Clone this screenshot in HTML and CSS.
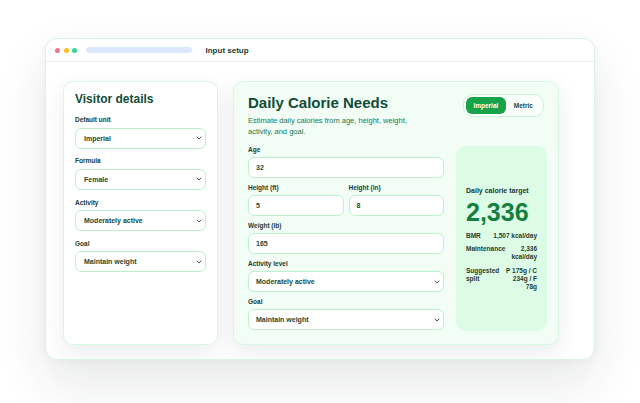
FILE: index.html
```html
<!DOCTYPE html>
<html lang="en">
<head>
<meta charset="utf-8">
<title>Input setup</title>
<link rel="stylesheet" href="styles.css">
</head>
<body>
<div class="window">
  <header class="titlebar">
    <span class="dot dot-red"></span>
    <span class="dot dot-yellow"></span>
    <span class="dot dot-green"></span>
    <span class="url"></span>
    <span class="win-title">Input setup</span>
  </header>

  <main class="workspace">
    <aside class="panel visitor">
      <h2 class="visitor-title">Visitor details</h2>
      <div class="field">
        <div class="label">Default unit</div>
        <div class="control select">Imperial<svg class="chev" viewBox="0 0 6 4"><path d="M1 1l2 2 2-2"/></svg></div>
      </div>
      <div class="field">
        <div class="label">Formula</div>
        <div class="control select">Female<svg class="chev" viewBox="0 0 6 4"><path d="M1 1l2 2 2-2"/></svg></div>
      </div>
      <div class="field">
        <div class="label">Activity</div>
        <div class="control select">Moderately active<svg class="chev" viewBox="0 0 6 4"><path d="M1 1l2 2 2-2"/></svg></div>
      </div>
      <div class="field">
        <div class="label">Goal</div>
        <div class="control select">Maintain weight<svg class="chev" viewBox="0 0 6 4"><path d="M1 1l2 2 2-2"/></svg></div>
      </div>
    </aside>

    <section class="panel calc">
      <div class="calc-head">
        <div>
          <h1 class="calc-title">Daily Calorie Needs</h1>
          <p class="calc-sub">Estimate daily calories from age, height, weight, activity, and goal.</p>
        </div>
        <div class="toggle">
          <span class="toggle-btn active">Imperial</span>
          <span class="toggle-btn">Metric</span>
        </div>
      </div>

      <div class="calc-body">
        <div class="form">
          <div class="form-field">
            <div class="label">Age</div>
            <div class="control">32</div>
          </div>
          <div class="form-pair">
            <div class="form-field">
              <div class="label">Height (ft)</div>
              <div class="control">5</div>
            </div>
            <div class="form-field">
              <div class="label">Height (in)</div>
              <div class="control">8</div>
            </div>
          </div>
          <div class="form-field">
            <div class="label">Weight (lb)</div>
            <div class="control">165</div>
          </div>
          <div class="form-field">
            <div class="label">Activity level</div>
            <div class="control select">Moderately active<svg class="chev" viewBox="0 0 6 4"><path d="M1 1l2 2 2-2"/></svg></div>
          </div>
          <div class="form-field">
            <div class="label">Goal</div>
            <div class="control select">Maintain weight<svg class="chev" viewBox="0 0 6 4"><path d="M1 1l2 2 2-2"/></svg></div>
          </div>
        </div>

        <div class="result">
          <div class="result-label">Daily calorie target</div>
          <div class="result-value">2,336</div>
          <div class="stats">
            <div class="stat"><span class="stat-k">BMR</span><span class="stat-v">1,507 kcal/day</span></div>
            <div class="stat"><span class="stat-k">Maintenance</span><span class="stat-v">2,336 kcal/day</span></div>
            <div class="stat"><span class="stat-k">Suggested split</span><span class="stat-v">P 175g / C 234g / F 78g</span></div>
          </div>
        </div>
      </div>
    </section>
  </main>
</div>
</body>
</html>
```

FILE: styles.css
```css
* {
  box-sizing: border-box;
}

html,
body {
  margin: 0;
  background: #ffffff;
}

body {
  width: 640px;
  height: 403px;
  padding: 38px 45px 0;
  font-family: "Liberation Sans", Arial, sans-serif;
  color: #1d3b2e;
  overflow: hidden;
}

h1,
h2,
p {
  margin: 0;
}

/* app window */
.window {
  width: 550px;
  height: 322px;
  background: #ffffff;
  border: 1px solid #d6f6e2;
  border-radius: 12px;
  box-shadow: 0 22px 50px rgba(30, 40, 50, 0.11), 0 2px 8px rgba(30, 40, 50, 0.04);
  overflow: hidden;
}

.titlebar {
  height: 23px;
  display: flex;
  align-items: center;
  padding-left: 9px;
  border-bottom: 1px solid #eaeeec;
}

.dot {
  width: 5px;
  height: 5px;
  border-radius: 50%;
  margin-right: 3.5px;
}

.dot-red { background: #f87185; }
.dot-yellow { background: #fbbf24; }
.dot-green { background: #34d399; }

.url {
  width: 106px;
  height: 6px;
  margin-left: 5px;
  border-radius: 3px;
  background: #dbe7fb;
}

.win-title {
  margin-left: 14px;
  font-size: 8px;
  font-weight: 700;
  color: #1f3a2e;
}

/* two-column workspace */
.workspace {
  display: grid;
  grid-template-columns: 155px 326px;
  gap: 15px;
  padding: 19px 17px 0;
  align-items: start;
}

.panel {
  height: 264px;
  border-radius: 10px;
  border: 1px solid #d7f7e3;
  box-shadow: 0 8px 22px rgba(30, 40, 50, 0.09);
}

/* visitor panel */
.visitor {
  background: #ffffff;
  padding: 10px 11px 0;
}

.visitor-title {
  font-size: 12px;
  line-height: 15px;
  font-weight: 700;
  color: #124d36;
  margin-bottom: 9px;
}

.field {
  margin-bottom: 8.8px;
}

.label {
  font-size: 6.5px;
  line-height: 8px;
  font-weight: 700;
  color: #1d3b2e;
  margin-bottom: 3.5px;
}

.control {
  height: 21px;
  display: flex;
  align-items: center;
  justify-content: space-between;
  padding: 0 3px 0 8px;
  background: #ffffff;
  border: 1px solid #bdf0cf;
  border-radius: 6px;
  font-size: 7px;
  font-weight: 700;
  color: #1b4a35;
}

.chev {
  width: 6px;
  height: 4px;
  fill: none;
  stroke: #2a4a3b;
  stroke-width: 0.9;
  stroke-linecap: round;
  stroke-linejoin: round;
}

/* calculator panel */
.calc {
  background: #f2fdf6;
  padding: 12px 12px 0 14px;
}

.calc-head {
  display: flex;
  justify-content: space-between;
  align-items: flex-start;
}

.calc-title {
  font-size: 15px;
  line-height: 18px;
  font-weight: 700;
  color: #114c36;
  margin-bottom: 2.5px;
}

.calc-sub {
  max-width: 172px;
  font-size: 7.5px;
  line-height: 11px;
  color: #18794f;
}

.toggle {
  display: flex;
  padding: 2px;
  margin-right: 2px;
  border: 1px solid #c9f4d8;
  border-radius: 10px;
  background: #fbfffc;
}

.toggle-btn {
  height: 16.5px;
  display: flex;
  align-items: center;
  padding: 0 8px;
  border-radius: 6px;
  font-size: 6.5px;
  font-weight: 700;
  color: #1b4a35;
}

.toggle-btn.active {
  background: #17a34a;
  color: #ffffff;
  padding: 0 7.5px;
}

.calc-body {
  display: grid;
  grid-template-columns: 196px 91px;
  gap: 12px;
  margin-top: 9.5px;
}

.form-field {
  margin-bottom: 6px;
}

.form-field .label {
  margin-bottom: 3px;
}

.form-field .control {
  height: 21px;
  padding-left: 7px;
}

.form-pair {
  display: grid;
  grid-template-columns: 1fr 1fr;
  gap: 5px;
}

/* result card */
.result {
  height: 185px;
  display: flex;
  flex-direction: column;
  justify-content: center;
  padding: 0 10px;
  background: #dcfce6;
  border-radius: 10px;
}

.result-label {
  font-size: 7px;
  line-height: 8px;
  font-weight: 700;
  color: #1d3b2e;
}

.result-value {
  font-size: 25px;
  line-height: 28px;
  font-weight: 700;
  color: #15803d;
  margin: 3px 0 6px;
}

.stats {
  display: flex;
  flex-direction: column;
  gap: 5.5px;
}

.stat {
  display: flex;
  justify-content: space-between;
  gap: 6px;
  font-size: 6.5px;
  line-height: 8px;
  font-weight: 700;
  color: #1f3d30;
}

.stat-v {
  text-align: right;
}
```
